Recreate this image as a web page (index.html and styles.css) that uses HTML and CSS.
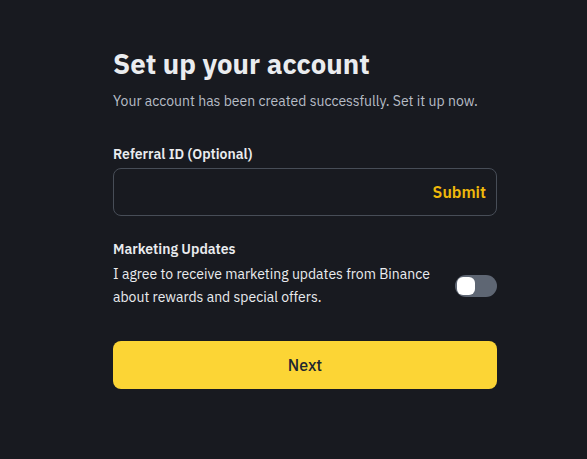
FILE: index.html
```html
<!DOCTYPE html>
<html>
<head>
<meta name="viewport" content="width=device-width, initial-scale=1.0">
  <title>Set up your account</title>
<link rel="stylesheet" href="styles.css">
</head>
<body>
<div class="page">
  <div class="setup">
    <h1 class="title">Set up your account</h1>
    <p class="subtitle">Your account has been created successfully. Set it up now.</p>

    <!-- referral -->
    <div class="field">
      <label class="label" for="referral">Referral ID (Optional)</label>
      <div class="input-box">
        <input id="referral" class="input" type="text">
        <span class="submit">Submit</span>
      </div>
    </div>

    <!-- marketing -->
    <div class="marketing">
      <div class="label">Marketing Updates</div>
      <div class="marketing-row">
        <p class="marketing-text">I agree to receive marketing updates from Binance about rewards and special offers.</p>
        <div class="switch"><span class="knob"></span></div>
      </div>
    </div>

    <button class="next-btn">Next</button>
  </div>
</div>
</body>
</html>
```

FILE: styles.css
```css
* {box-sizing: border-box;}

body {
  margin: 0;
  background: #181a20;
  color: #eaecef;
  font-family: "IBM Plex Sans", Roboto, "Liberation Sans", sans-serif;
}

.page {
  padding: 46px 0 0 113px;
}

.setup {
  width: 384px;
}

.title {
  margin: 0;
  font-size: 27.6px;
  line-height: 36px;
  font-weight: 700;
  color: #eaecef;
}

.subtitle {
  margin: 9px 0 0;
  font-size: 14px;
  line-height: 20px;
  color: #b7bdc6;
}

.field {
  margin-top: 33px;
}

.label {
  display: block;
  font-size: 14px;
  line-height: 20px;
  font-weight: 600;
  color: #eaecef;
}

.input-box {
  margin-top: 4px;
  height: 48px;
  border: 1px solid #474d57;
  border-radius: 8px;
  display: flex;
  align-items: center;
  padding: 0 10px 0 12px;
}

.input {
  flex: 1;
  min-width: 0;
  height: 100%;
  background: transparent;
  border: 0;
  outline: 0;
  color: #eaecef;
  font: inherit;
}

.submit {
  color: #f0b90b;
  font-size: 16px;
  font-weight: 600;
}

.marketing {
  margin-top: 23px;
}

.marketing-row {
  display: flex;
  align-items: center;
  justify-content: space-between;
  margin-top: 4px;
}

.marketing-text {
  margin: 0;
  width: 330px;
  font-size: 14px;
  line-height: 23px;
  color: #eaecef;
}

.switch {
  width: 42px;
  height: 22px;
  border-radius: 11px;
  background: #5e6673;
  padding: 2px;
  flex-shrink: 0;
}

.knob {
  display: block;
  width: 18px;
  height: 18px;
  border-radius: 6px;
  background: #fff;
}

.next-btn {
  margin-top: 32px;
  width: 100%;
  height: 48px;
  border: 0;
  border-radius: 8px;
  background: #fcd535;
  color: #202630;
  font: inherit;
  font-size: 16px;
  font-weight: 500;
  cursor: pointer;
}
```
